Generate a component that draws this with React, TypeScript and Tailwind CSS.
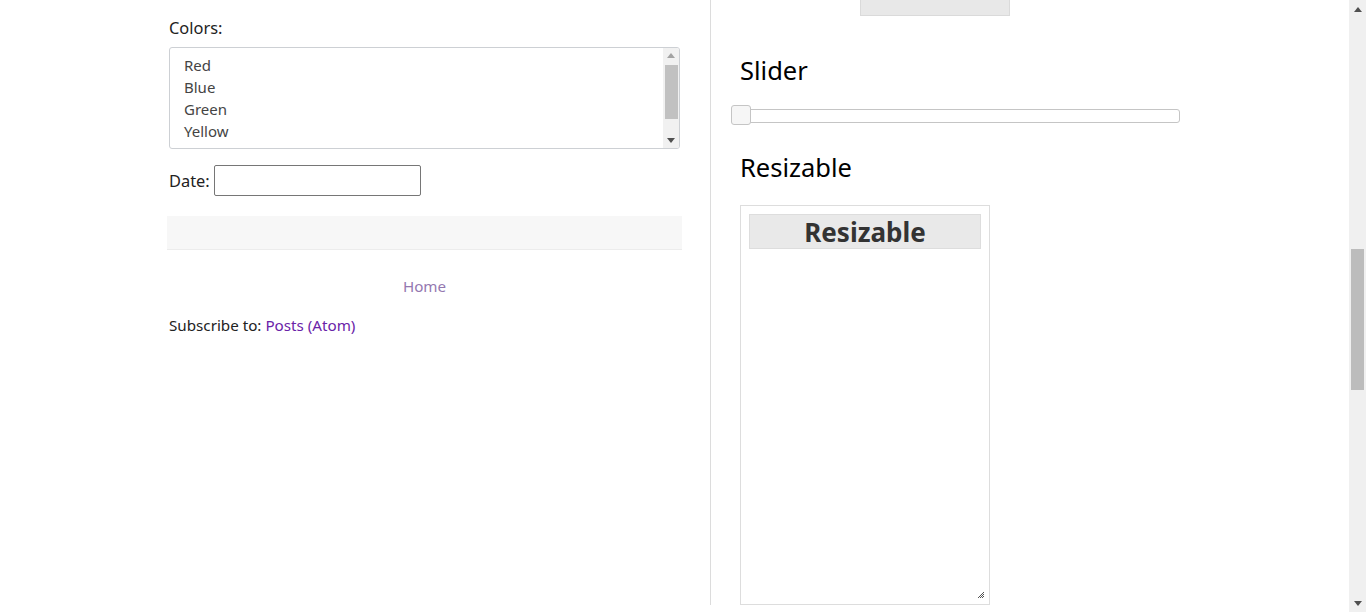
import React from "react";

const font = { fontFamily: '"Segoe UI", "Noto Sans", "Open Sans", sans-serif' };

function Arrow({ dir, className }: { dir: "up" | "down"; className?: string }) {
  return (
    <svg width="8" height="5" viewBox="0 0 8 5" className={className}>
      {dir === "up" ? (
        <polygon points="0,5 8,5 4,0" fill="currentColor" />
      ) : (
        <polygon points="0,0 8,0 4,5" fill="currentColor" />
      )}
    </svg>
  );
}

function ColorList() {
  const colors = ["Red", "Blue", "Green", "Yellow", "White"];
  return (
    <div className="ml-[2px] flex h-[102px] w-[511px] overflow-hidden rounded-[3px] border border-[#cdd0d4] bg-white">
      <div className="flex-1 overflow-hidden pl-[14px] pt-[6px] text-[15px] leading-[22px] text-[#444]">
        {colors.map((c) => (
          <div key={c}>{c}</div>
        ))}
      </div>
      <div className="flex w-[16px] flex-col items-center bg-[#f1f1f1] text-[#a3a3a3]">
        <Arrow dir="up" className="mt-[5px]" />
        <div className="mt-[7px] h-[54px] w-[13px] bg-[#c1c1c1]" />
        <div className="flex-1" />
        <Arrow dir="down" className="mb-[5px] text-[#505050]" />
      </div>
    </div>
  );
}

function LeftColumn() {
  return (
    <div className="w-[515px] pt-[16px] text-[#222]">
      <p className="ml-[2px] text-[16.4px] leading-[24px]">Colors:</p>
      <div className="mt-[7px]">
        <ColorList />
      </div>
      <div className="ml-[2px] mt-[16px] flex items-center gap-[4px]">
        <span className="text-[16.4px] leading-[24px]">Date:</span>
        <div className="h-[31px] w-[207px] rounded-[2px] border border-[#767676] bg-white" />
      </div>
      <div className="mt-[20px] h-[34px] border-b border-[#ececec] bg-[#f7f7f7]" />
      <div className="mt-[25px] text-center text-[15.2px] leading-[22px]">
        <a href="#" className="text-[#9478b0]">Home</a>
      </div>
      <p className="ml-[2px] mt-[17px] text-[15.2px] leading-[22px]">
        Subscribe to:{" "}
        <a href="#" className="text-[#6a23a8]">Posts (Atom)</a>
      </p>
    </div>
  );
}

function RightColumn() {
  return (
    <div className="flex-1 pl-[29px] text-black">
      <div className="ml-[120px] h-[16px] w-[150px] border border-t-0 border-[#dadada] bg-[#e8e8e8]" />
      <h2 className="mt-[38px] text-[25.5px] leading-[32px]">Slider</h2>
      <div className="relative ml-[-9px] mt-[23px] h-[14px] w-[449px] rounded-[3px] border border-[#c5c5c5] bg-white">
        <div className="absolute left-[-1px] top-[-5px] h-[20px] w-[20px] rounded-[3px] border border-[#c5c5c5] bg-[#f6f6f6]" />
      </div>
      <h2 className="mt-[28px] text-[25.5px] leading-[32px]">Resizable</h2>
      <div className="relative mt-[22px] h-[400px] w-[250px] border border-[#dddddd] bg-white p-[8px]">
        <div className="h-[35px] border border-[#dddddd] bg-[#e9e9e9] text-center text-[26px] font-bold leading-[35px] text-[#333]">
          Resizable
        </div>
        <svg width="8" height="8" viewBox="0 0 8 8" className="absolute bottom-[5px] right-[4px] text-[#555]">
          <path d="M7 1 L1 7 M7 3 L3 7 M7 5 L5 7" stroke="currentColor" strokeWidth="1" />
        </svg>
      </div>
    </div>
  );
}

function PageScrollbar() {
  return (
    <div className="flex h-[612px] w-[17px] flex-col items-center bg-[#f0f0f0] text-[#505050]">
      <Arrow dir="up" className="mt-[7px]" />
      <div className="mt-[237px] h-[141px] w-[13px] bg-[#bcbcbc]" />
      <div className="flex-1" />
      <Arrow dir="down" className="mb-[6px]" />
    </div>
  );
}

export default function App() {
  return (
    <div className="flex h-[612px] w-[1366px] overflow-hidden bg-white" style={font}>
      <div className="flex flex-1 pl-[167px]">
        <LeftColumn />
        <div className="ml-[28px] h-[605px] w-px bg-[#dcdcdc]" />
        <RightColumn />
      </div>
      <PageScrollbar />
    </div>
  );
}
